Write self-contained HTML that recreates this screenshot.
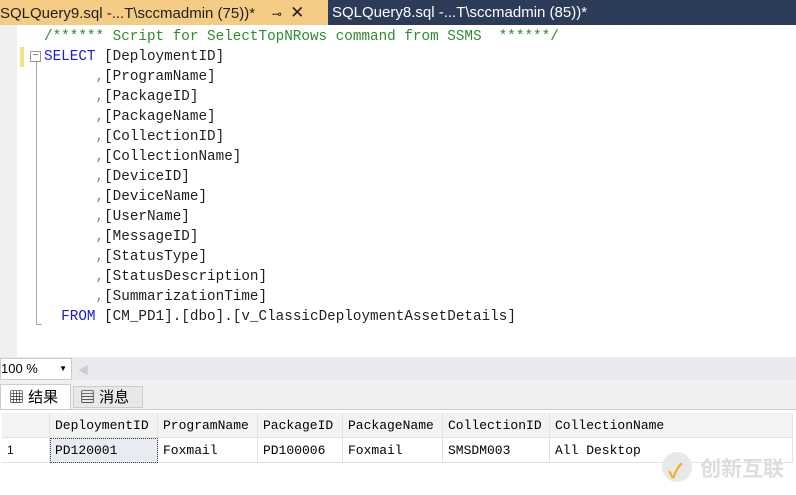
<!DOCTYPE html>
<html><head><style>
body{margin:0;width:796px;height:494px;overflow:hidden;background:#fff;font-family:"Liberation Sans","Noto Sans CJK SC",sans-serif;position:relative}
.abs{position:absolute}
.tabbar{left:0;top:0;width:796px;height:25px;background:#2b3b58}
.t1{left:0;top:0;width:328px;height:25px;background:#f5cc84;color:#1e1e1e;font-size:15px;line-height:25px;white-space:nowrap}
.t2{left:332px;top:0;height:25px;color:#fff;font-size:15px;line-height:25px;white-space:nowrap}
.gut{left:0;top:25px;width:17px;height:332px;background:#f0f0f0}
.code{font-family:"Liberation Mono",monospace;font-size:14.3px;white-space:pre;color:#1e1e1e;line-height:20px}
.kw{color:#1a1ad0}.cm{color:#2e8b2e}.gr{color:#888}
.zoom{left:0;top:357px;width:796px;height:23px;background:#e9e9ee}
.res{left:0;top:380px;width:796px;height:114px;background:#f0f0f0}
td{font-family:"Liberation Mono",monospace;font-size:13px;height:24px;padding:0 0 0 5px;border-right:1px solid #e2e2e2;border-bottom:1px solid #e2e2e2;white-space:nowrap}
</style></head><body>
<div class="abs tabbar"></div>
<div class="abs t1">SQLQuery9.sql -...T\sccmadmin (75))*&nbsp;&nbsp;&nbsp;&nbsp;<span style="font-size:12px">⊸</span>&nbsp;&nbsp;<span style="font-size:17px">✕</span></div>
<div class="abs t2">SQLQuery8.sql -...T\sccmadmin (85))*</div>
<div class="abs gut"></div>
<div class="abs" style="left:20px;top:47px;width:4px;height:20px;background:#f4e27a"></div>
<div class="abs" style="left:30px;top:51px;width:9px;height:9px;border:1px solid #999;background:#fff;font-size:10px;line-height:8px;text-align:center;color:#555">−</div>
<div class="abs" style="left:36px;top:62px;width:1px;height:263px;background:#aaa"></div>
<div class="abs" style="left:36px;top:324px;width:6px;height:1px;background:#aaa"></div>
<div class="abs code" style="left:44px;top:27px"><span class="cm">/****** Script for SelectTopNRows command from SSMS  ******/</span>
<span class="kw">SELECT</span> [DeploymentID]
      <span class="gr">,</span>[ProgramName]
      <span class="gr">,</span>[PackageID]
      <span class="gr">,</span>[PackageName]
      <span class="gr">,</span>[CollectionID]
      <span class="gr">,</span>[CollectionName]
      <span class="gr">,</span>[DeviceID]
      <span class="gr">,</span>[DeviceName]
      <span class="gr">,</span>[UserName]
      <span class="gr">,</span>[MessageID]
      <span class="gr">,</span>[StatusType]
      <span class="gr">,</span>[StatusDescription]
      <span class="gr">,</span>[SummarizationTime]
  <span class="kw">FROM</span> [CM_PD1].[dbo].[v_ClassicDeploymentAssetDetails]</div>
<div class="abs zoom"></div>
<div class="abs" style="left:0;top:358px;width:70px;height:20px;background:#fff;border:1px solid #ccc;font-size:13px;line-height:20px">100 %<span style="position:absolute;right:4px;font-size:8px">▼</span></div>
<div class="abs" style="left:78px;top:362px;color:#ccc;font-size:11px">◀</div>
<div class="abs res"></div>
<div class="abs" style="left:0;top:384px;width:71px;height:27px;background:#fff;border:1px solid #ccc;border-bottom:none;font-size:15px;line-height:25px;padding-left:8px;box-sizing:border-box">▦ 结果</div>
<div class="abs" style="left:73px;top:386px;width:70px;height:22px;background:#e8e8e8;border:1px solid #ccc;font-size:15px;line-height:22px;padding-left:6px;box-sizing:border-box">▤ 消息</div>
<div class="abs" style="left:0;top:409px;width:796px;height:85px;background:#fff;border-top:1px solid #ccc"></div>
<table class="abs" style="left:2px;top:413px;border-collapse:collapse">
<tr style="background:#f3f3f3"><td style="width:42px"></td><td style="width:102px">DeploymentID</td><td style="width:94px">ProgramName</td><td style="width:79px">PackageID</td><td style="width:94px">PackageName</td><td style="width:101px">CollectionID</td><td style="width:237px">CollectionName</td></tr>
<tr><td style="font-family:'Liberation Sans';font-size:12px">1</td><td style="background:#e8ecf2;outline:1px dotted #444;outline-offset:-1px">PD120001</td><td>Foxmail</td><td>PD100006</td><td>Foxmail</td><td>SMSDM003</td><td>All Desktop</td></tr>
</table>
<div class="abs" style="left:662px;top:452px;width:30px;height:30px;border-radius:50%;background:#e8e8e8"></div>
<div class="abs" style="left:668px;top:455px;color:#f0b020;font-size:20px;font-weight:bold">✓</div>
<div class="abs" style="left:700px;top:453px;color:#ddd;font-size:21px;font-weight:bold">创新互联</div>
</body></html>
